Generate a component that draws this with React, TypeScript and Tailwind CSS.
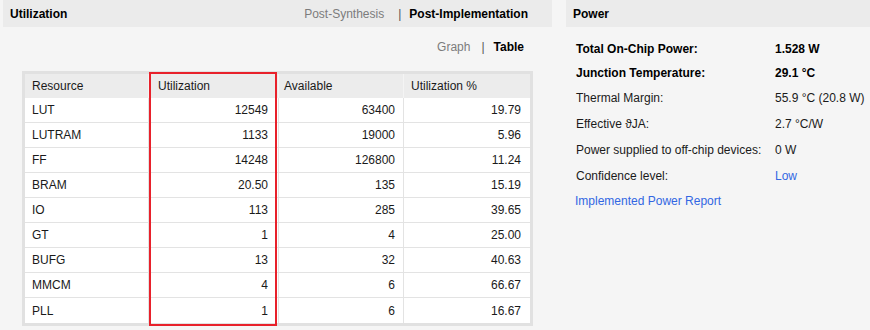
import React from "react";

const rows: [string, string, string, string][] = [
  ["LUT", "12549", "63400", "19.79"],
  ["LUTRAM", "1133", "19000", "5.96"],
  ["FF", "14248", "126800", "11.24"],
  ["BRAM", "20.50", "135", "15.19"],
  ["IO", "113", "285", "39.65"],
  ["GT", "1", "4", "25.00"],
  ["BUFG", "13", "32", "40.63"],
  ["MMCM", "4", "6", "66.67"],
  ["PLL", "1", "6", "16.67"],
];

const power: { label: string; value: string; bold?: boolean; link?: boolean; h: string }[] = [
  { label: "Total On-Chip Power:", value: "1.528 W", bold: true, h: "h-[24px]" },
  { label: "Junction Temperature:", value: "29.1 °C", bold: true, h: "h-[24px]" },
  { label: "Thermal Margin:", value: "55.9 °C (20.8 W)", h: "h-[26px]" },
  { label: "Effective ϑJA:", value: "2.7 °C/W", h: "h-[26px]" },
  { label: "Power supplied to off-chip devices:", value: "0 W", h: "h-[26px]" },
  { label: "Confidence level:", value: "Low", link: true, h: "h-[26px]" },
];

export default function App() {
  return (
    <div className="w-[870px] h-[330px] bg-[#f5f5f5] font-['Liberation_Sans',Arial,sans-serif] text-[12px] text-[#1a1a1a] flex pl-[3px] gap-[14px] overflow-hidden">
      {/* Left panel */}
      <div className="w-[549px] flex flex-col">
        <div className="h-[27px] bg-[#ebebeb] flex items-center justify-between pl-[7px] pr-[24px]">
          <span className="font-bold text-black">Utilization</span>
          <div className="flex items-center">
            <span className="text-[#7c7c7c]">Post-Synthesis</span>
            <span className="ml-[14px] mr-[8px] text-[#555]">|</span>
            <span className="font-bold text-black">Post-Implementation</span>
          </div>
        </div>
        <div className="mt-[10px] h-[20px] flex items-center justify-end pr-[28px]">
          <span className="text-[#7c7c7c]">Graph</span>
          <span className="ml-[11px] mr-[9px] text-[#555]">|</span>
          <span className="font-bold text-black">Table</span>
        </div>
        <div className="mt-[14px] ml-[19px] w-[511px] border-[3px] border-[#e1e1e1] bg-white relative">
          <div className="flex h-[24px] bg-[#ececec] items-center">
            <div className="w-[124px] pl-[7px] border-r border-[#f4f4f4] h-full flex items-center">Resource</div>
            <div className="w-[130px] pl-[9px] border-r border-[#f4f4f4] h-full flex items-center">Utilization</div>
            <div className="w-[125px] pl-[5px] border-r border-[#f4f4f4] h-full flex items-center">Available</div>
            <div className="w-[126px] pl-[7px] h-full flex items-center">Utilization %</div>
          </div>
          {rows.map((r, i) => (
            <div
              key={r[0]}
              className={`flex h-[25px] ${i < rows.length - 1 ? "border-b border-[#e3e3e3]" : "h-[24px]"}`}
            >
              <div className="w-[124px] pl-[7px] border-r border-[#e3e3e3] flex items-center">{r[0]}</div>
              <div className="w-[130px] pr-[10px] border-r border-[#e3e3e3] flex items-center justify-end">{r[1]}</div>
              <div className="w-[125px] pr-[8px] border-r border-[#e3e3e3] flex items-center justify-end">{r[2]}</div>
              <div className="w-[126px] pr-[9px] flex items-center justify-end">{r[3]}</div>
            </div>
          ))}
          <div className="absolute left-[124px] top-[-2px] bottom-[-3px] w-[128px] border-2 border-[#e8212b] pointer-events-none" />
        </div>
      </div>

      {/* Right panel */}
      <div className="flex-1 flex flex-col">
        <div className="h-[27px] bg-[#ebebeb] flex items-center pl-[7px]">
          <span className="font-bold text-black">Power</span>
        </div>
        <div className="pt-[10px] pl-[10px] flex flex-col">
          {power.map((p) => (
            <div key={p.label} className={`${p.h} flex items-center`}>
              <span className={`w-[199px] ${p.bold ? "font-bold text-black" : ""}`}>{p.label}</span>
              <span className={`${p.bold ? "font-bold text-black" : ""} ${p.link ? "text-[#3267e3]" : ""}`}>{p.value}</span>
            </div>
          ))}
          <div className="h-[24px] flex items-center -ml-[1px]">
            <span className="text-[#3267e3]">Implemented Power Report</span>
          </div>
        </div>
      </div>
    </div>
  );
}
